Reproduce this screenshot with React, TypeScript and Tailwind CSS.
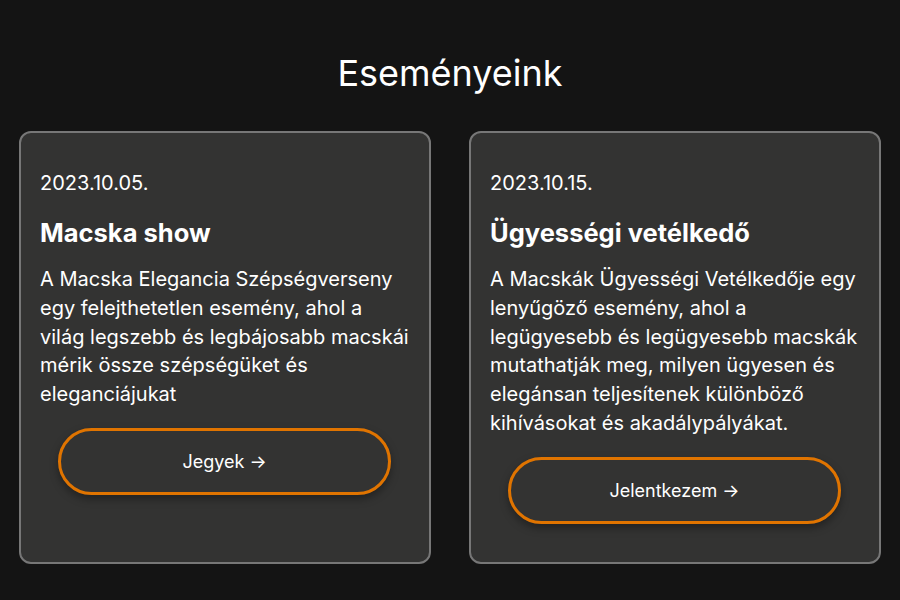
const events = [
  {
    date: "2023.10.05.",
    title: "Macska show",
    text: "A Macska Elegancia Szépségverseny egy felejthetetlen esemény, ahol a világ legszebb és legbájosabb macskái mérik össze szépségüket és eleganciájukat",
    button: "Jegyek",
  },
  {
    date: "2023.10.15.",
    title: "Ügyességi vetélkedő",
    text: "A Macskák Ügyességi Vetélkedője egy lenyűgöző esemény, ahol a legügyesebb és legügyesebb macskák mutathatják meg, milyen ügyesen és elegánsan teljesítenek különböző kihívásokat és akadálypályákat.",
    button: "Jelentkezem",
  },
]

export default function App() {
  return (
    <div className="min-h-screen bg-[#141414] text-white font-['Inter',sans-serif] px-[19px] pt-[50px] pb-[38px]">
      <h1 className="text-center text-[36px] leading-[46px] font-normal mb-[35px]">Eseményeink</h1>

      <div className="grid grid-cols-2 gap-[38px]">
        {events.map((e) => (
          <div
            key={e.title}
            className="bg-[#333332] border-2 border-[#777777] rounded-[12px] pl-[19px] pr-[17px] pt-[36px] pb-[18px] flex flex-col"
          >
            <p className="text-[20px] leading-[29px]">{e.date}</p>
            <h2 className="text-[25.5px] leading-[31px] font-bold mt-[19px] mb-[17px]">{e.title}</h2>
            <p className="text-[20px] leading-[28.8px]">{e.text}</p>
            <button className="w-[333px] ml-[18px] mt-[19px] mb-[20px] h-[67px] rounded-full border-[3px] border-[#e07400] text-[18px] shadow-[0_4px_8px_rgba(0,0,0,0.35)]">
              {e.button} →
            </button>
          </div>
        ))}
      </div>
    </div>
  )
}
